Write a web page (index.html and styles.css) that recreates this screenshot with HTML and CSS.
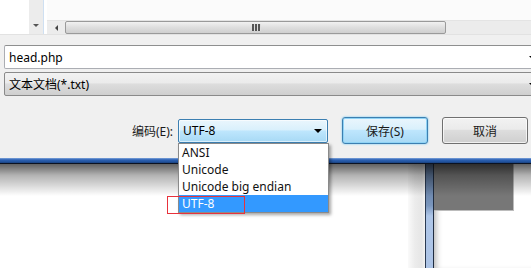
FILE: index.html
```html
<!DOCTYPE html>
<html lang="zh-CN">
<head>
  <meta charset="UTF-8">
  <title>另存为</title>
  <link rel="stylesheet" href="styles.css">
</head>
<body>
  <div class="screen">
    <div class="browser">
      <div class="pane-left"></div>
      <div class="vscroll"><span class="arrow-down"></span></div>
      <div class="view">
        <div class="view-body"></div>
        <div class="hscroll">
          <div class="hbtn"><span class="arrow-left"></span></div>
          <div class="hthumb"><span class="grip"></span></div>
          <div class="htrack"></div>
        </div>
      </div>
    </div>

    <div class="dialog">
      <div class="field input">head.php<span class="cut-arrow"></span></div>
      <div class="field combo">文本文档(*.txt)<span class="cut-arrow"></span></div>
      <div class="actions">
        <label class="lbl">编码(E):</label>
        <div class="select-wrap">
          <div class="select">UTF-8<span class="arrow-down dark"></span></div>
          <ul class="options">
            <li>ANSI</li>
            <li>Unicode</li>
            <li>Unicode big endian</li>
            <li class="selected">UTF-8</li>
          </ul>
          <div class="mark"></div>
        </div>
        <button class="btn primary">保存(S)</button>
        <button class="btn">取消</button>
      </div>
    </div>

    <div class="frame-edge"></div>

    <div class="below">
      <div class="page"></div>
      <div class="gutter"></div>
      <div class="splitter"></div>
      <div class="side">
        <div class="thumb-box"></div>
      </div>
    </div>
  </div>
</body>
</html>
```

FILE: styles.css
```css
body {
  margin: 0;
  background: #fff;
  font-family: "Noto Sans", "Noto Sans CJK SC", sans-serif;
  font-size: 12px;
  color: #000;
}
.screen {
  width: 531px;
  height: 269px;
  overflow: hidden;
  position: relative;
}

/* explorer remains at the top */
.browser {
  display: flex;
  height: 35px;
  background: #fff;
  border-bottom: 1px solid #e2e2e2;
  box-sizing: border-box;
}
.pane-left {
  width: 29px;
  background: #fff;
}
.vscroll {
  width: 15px;
  background: #ececec;
  display: flex;
  align-items: flex-end;
  justify-content: center;
  padding-bottom: 7px;
  box-sizing: border-box;
  border-right: 1px solid #cfe0f2;
}
.arrow-down {
  width: 0;
  height: 0;
  border-left: 3px solid transparent;
  border-right: 3px solid transparent;
  border-top: 3px solid #555;
}
.view {
  flex: 1;
  display: flex;
  flex-direction: column;
  padding-left: 3px;
}
.view-body {
  height: 20px;
  background: #fbfbfb;
}
.hscroll {
  flex: 1;
  display: flex;
  background: #ececec;
  border-top: 1px solid #e4e4e4;
}
.hbtn {
  width: 18px;
  display: flex;
  align-items: center;
  justify-content: center;
}
.arrow-left {
  width: 0;
  height: 0;
  border-top: 3px solid transparent;
  border-bottom: 3px solid transparent;
  border-right: 3px solid #444;
}
.hthumb {
  width: 381px;
  box-sizing: border-box;
  border: 1px solid #9a9a9a;
  border-radius: 2px;
  background: linear-gradient(#f1f1f1, #dedede 50%, #cfcfcf);
  display: flex;
  align-items: center;
  padding-left: 186px;
}
.grip {
  width: 9px;
  height: 7px;
  background: repeating-linear-gradient(90deg, #555 0 2px, #ddd 2px 3px);
}
.htrack {
  flex: 1;
}

/* save dialog */
.dialog {
  background: #f0f0f0;
  padding: 10px 0 14px 4px;
}
.field {
  position: relative;
  height: 24px;
  width: 540px;
  box-sizing: border-box;
  display: flex;
  align-items: center;
  padding-left: 4px;
  border-radius: 2px;
}
.input {
  background: #fff;
  border: 1px solid #abadb3;
  border-top-color: #8e8f8f;
  margin-bottom: 3px;
}
.combo {
  background: linear-gradient(#f2f2f2, #ebebeb 45%, #dddddd 50%, #cfcfcf);
  border: 1px solid #8a8a8a;
}
.cut-arrow {
  position: absolute;
  left: 524px;
  top: 10px;
  width: 0;
  height: 0;
  border-left: 3px solid transparent;
  border-right: 3px solid transparent;
  border-top: 3px solid #000;
}
.actions {
  display: flex;
  justify-content: flex-end;
  align-items: center;
  margin-top: 21px;
  padding-right: 3px;
}
.lbl {
  margin-right: 5px;
  color: #1a1a1a;
}
.select-wrap {
  position: relative;
  width: 150px;
  margin-right: 14px;
}
.select {
  height: 24px;
  box-sizing: border-box;
  border: 1px solid #3c7fb1;
  border-radius: 2px;
  background: linear-gradient(#eaf6fd, #d9f0fc 45%, #bee6fd 50%, #a7d9f5);
  display: flex;
  align-items: center;
  justify-content: space-between;
  padding: 0 4px 0 4px;
  box-shadow: inset 0 0 0 1px rgba(255, 255, 255, 0.6);
}
.arrow-down.dark {
  border-left-width: 4px;
  border-right-width: 4px;
  border-top: 4px solid #000;
  margin-right: 1px;
}
.options {
  position: absolute;
  top: 100%;
  left: 0;
  width: 151px;
  margin: 0;
  padding: 0;
  list-style: none;
  background: #fff;
  border: 1px solid #8a8a8a;
  box-sizing: border-box;
  box-shadow: 2px 2px 3px rgba(0, 0, 0, 0.35);
  z-index: 2;
}
.options li {
  height: 17px;
  line-height: 17px;
  padding-left: 3px;
  color: #111;
}
.options li.selected {
  background: #3399ff;
  color: #fff;
}
.mark {
  position: absolute;
  left: -11px;
  top: 77px;
  width: 78px;
  height: 18px;
  box-sizing: border-box;
  border: 1px solid #e8323c;
  z-index: 3;
}
.btn {
  width: 86px;
  height: 27px;
  box-sizing: border-box;
  font: inherit;
  color: #1a1a1a;
  border: 1px solid #707070;
  border-radius: 3px;
  background: linear-gradient(#f2f2f2, #ebebeb 45%, #dddddd 50%, #cfcfcf);
  box-shadow: inset 0 0 0 1px rgba(255, 255, 255, 0.7);
  padding: 0;
}
.btn.primary {
  margin-right: 14px;
  border-color: #3c7fb1;
  background: linear-gradient(#eaf6fd, #d9f0fc 45%, #bee6fd 50%, #a7d9f5);
  box-shadow: inset 0 0 0 1px #8fd3f5, 0 0 2px #54c2f5;
}

/* window border and what lies behind */
.frame-edge {
  height: 6px;
  background: linear-gradient(#7fa5dc, #2d62b4 30%, #1f4f98 70%, #0f2442);
  box-shadow: inset 0 -1px 0 #0a1222;
}
.below {
  position: relative;
  display: flex;
  height: 104px;
  background: #fff;
}
.below::after {
  content: "";
  position: absolute;
  left: 0;
  right: 0;
  top: 0;
  height: 32px;
  background: linear-gradient(rgba(0, 0, 0, 0.62), rgba(0, 0, 0, 0.3) 35%, rgba(0, 0, 0, 0));
  pointer-events: none;
}
.page {
  width: 408px;
}
.gutter {
  width: 17px;
  background: linear-gradient(90deg, #fafafa, #ececec 40%, #e6e6e6 80%, #f3f3f3);
}
.splitter {
  width: 9px;
  box-sizing: border-box;
  border-left: 1px solid #2a3a52;
  border-right: 1px solid #1f2c40;
  background: linear-gradient(#52698a, #7a96bd 40%, #aec6e8 50%, #adc4e6);
}
.side {
  flex: 1;
  box-shadow: inset 6px 0 6px -4px rgba(0, 0, 0, 0.3);
}
.thumb-box {
  width: 79px;
  height: 46px;
  background: #777;
  border-right: 1px solid #bcbcbc;
  border-bottom: 1px solid #bcbcbc;
}
```
